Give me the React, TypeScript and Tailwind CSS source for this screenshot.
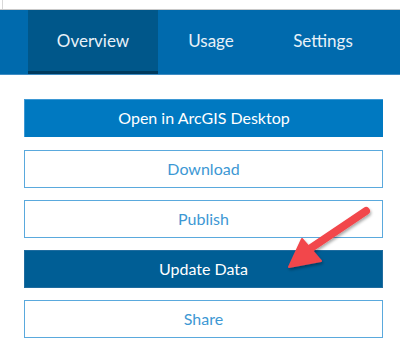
import React from "react";

const font = { fontFamily: "Lato, 'Open Sans', sans-serif" };

export default function App() {
  const outline =
    "h-[38px] flex items-center justify-center border border-[#5aa9dd] text-[#3d98d4] text-[16px] bg-white";
  return (
    <div className="relative w-[400px] h-[348px] bg-white overflow-hidden" style={font}>
      <div className="h-[9px] ml-[2px] border-l border-[#d8d8d8]" />
      <div className="h-px bg-[#c9c9c9]" />
      <div className="h-[65px] bg-[#006aad] flex pl-[28px] border-b border-[#3e8cc4]">
        <div className="h-full bg-[#00578a] px-[29px] flex flex-col w-[130px]">
          <div className="flex-1 flex items-center justify-center text-[#e8f1f8] text-[17px]">Overview</div>
          <div className="h-[3px] bg-[#003a5e] -mx-[29px]" />
        </div>
        <div className="h-full w-[106px] flex items-center justify-center text-[#e8f1f8] text-[17px] pb-[3px]">Usage</div>
        <div className="h-full w-[118px] flex items-center justify-center text-[#e8f1f8] text-[17px] pb-[3px]">Settings</div>
      </div>
      <div className="mx-[24px] mr-[17px] mt-[24px] flex flex-col gap-[12px]">
        <div className="h-[38px] flex items-center justify-center bg-[#0079c1] border-l border-t border-[#3d98d4] text-white text-[16px] pb-px">
          Open in ArcGIS Desktop
        </div>
        <div className={outline + " mt-px"}>Download</div>
        <div className={outline}>Publish</div>
        <div className="h-[38px] flex items-center justify-center bg-[#005e95] border border-[#1f6c9f] text-white text-[16px]">
          Update Data
        </div>
        <div className={outline}>Share</div>
      </div>
      <svg className="absolute left-0 top-0" width="400" height="348" viewBox="0 0 400 348">
        <defs>
          <filter id="sh" x="-20%" y="-20%" width="140%" height="140%">
            <feDropShadow dx="1" dy="2" stdDeviation="1.5" floodColor="#000" floodOpacity="0.35" />
          </filter>
        </defs>
        <g filter="url(#sh)">
          <line x1="366" y1="211" x2="308" y2="250" stroke="#f2464b" strokeWidth="8" strokeLinecap="round" />
          <polygon points="289,267 302,239 321,261" fill="#f2464b" stroke="#f2464b" strokeWidth="2" strokeLinejoin="round" />
        </g>
      </svg>
    </div>
  );
}
